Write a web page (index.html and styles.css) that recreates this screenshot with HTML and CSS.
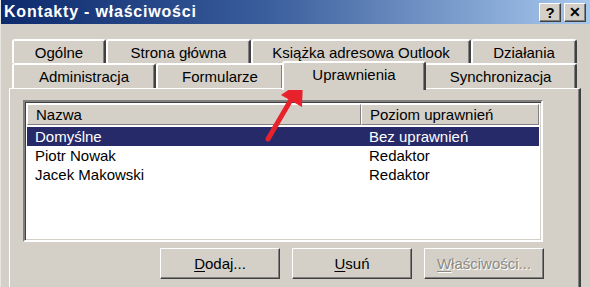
FILE: index.html
```html
<!DOCTYPE html>
<html>
	<head>
		<meta charset="UTF-8">
		<title>Kontakty - właściwości</title>
		<link rel="stylesheet" href="styles.css">
	</head>
	<body>
		<div class="window">
			<div class="titlebar">
				<span class="title">Kontakty - właściwości</span>
				<div class="caption-btns">
					<span class="cbtn">?</span>
					<span class="cbtn cbtn-x">✕</span>
				</div>
			</div>
			<div class="client">
				<div class="tabs">
					<div class="tabrow">
						<div class="tab w-ogolne">Ogólne</div>
						<div class="tab w-strona">Strona główna</div>
						<div class="tab w-ksiazka">Książka adresowa Outlook</div>
						<div class="tab w-dzialania">Działania</div>
					</div>
					<div class="tabrow">
						<div class="tab w-admin">Administracja</div>
						<div class="tab w-form">Formularze</div>
						<div class="tab tab-active w-upr">Uprawnienia</div>
						<div class="tab w-sync">Synchronizacja</div>
					</div>
				</div>
				<div class="panel">
					<div class="listview">
						<div class="lv-head">
							<div class="lv-col c1">Nazwa</div>
							<div class="lv-col c2">Poziom uprawnień</div>
						</div>
						<div class="lv-row selected">
							<div class="c1">Domyślne</div>
							<div class="c2">Bez uprawnień</div>
						</div>
						<div class="lv-row">
							<div class="c1">Piotr Nowak</div>
							<div class="c2">Redaktor</div>
						</div>
						<div class="lv-row">
							<div class="c1">Jacek Makowski</div>
							<div class="c2">Redaktor</div>
						</div>
					</div>
					<div class="buttons">
						<button class="btn"><u>D</u>odaj...</button>
						<button class="btn"><u>U</u>suń</button>
						<button class="btn btn-disabled"><u>W</u>łaściwości...</button>
					</div>
				</div>
			</div>
		</div>
		<svg class="arrow" width="590" height="287" viewBox="0 0 590 287">
			<line x1="268" y1="139" x2="292" y2="98" stroke="#e8222c" stroke-width="5" stroke-linecap="round"/>
			<polygon points="303,80 281,95 302,107" fill="#e8222c"/>
		</svg>
	</body>
</html>
```

FILE: styles.css
```css
*{margin:0;padding:0;box-sizing:border-box;}
body{width:590px;height:287px;overflow:hidden;background:#d4d0c8;font-family:"Liberation Sans",Arial,sans-serif;font-size:15px;color:#000;position:relative;}

.window{height:287px;border-left:1px solid #e8e6e0;}
.titlebar{height:24px;background:linear-gradient(to right,#0c2a6c,#3a5d9c 45%,#a8c9ee);display:flex;align-items:center;justify-content:space-between;padding:0 4px 0 3px;}
.title{color:#fff;font-weight:bold;font-size:16px;letter-spacing:0.8px;}
.caption-btns{display:flex;gap:3px;padding-top:1px;}
.cbtn{width:22px;height:19px;background:#d4d0c8;border:1px solid;border-color:#fff #404040 #404040 #fff;box-shadow:inset -1px -1px 0 #808080;font-weight:bold;font-size:15px;line-height:17px;text-align:center;}
.cbtn-x{font-size:14px;}

.client{padding:15px 0 0 8px;}
.tabs{padding-left:3px;}
.tabrow{display:flex;height:24px;}
.tabrow + .tabrow{height:25px;}
.tab{height:100%;background:#d4d0c8;border-left:2px solid #fff;border-top:2px solid #fff;border-right:2px solid #404040;box-shadow:inset -1px 0 0 #808080;border-radius:3px 3px 0 0;text-align:center;padding-top:3px;white-space:nowrap;}
.tab-active{position:relative;z-index:2;height:29px;margin:-2px -2px 0 -2px;padding-top:3px;}
.w-ogolne{width:94px;}
.w-strona{width:145px;}
.w-ksiazka{width:220px;}
.w-dzialania{width:106px;}
.w-admin{width:144px;}
.w-form{width:128px;}
.w-upr{width:144px;}
.w-sync{width:153px;}

.panel{width:572px;height:199px;border-left:1px solid #fff;border-top:1px solid #fff;border-right:2px solid #404040;box-shadow:inset -1px 0 0 #808080;padding:11px 0 0 13px;}
.listview{width:520px;height:142px;background:#fff;border:2px solid;border-color:#808080 #fff #fff #808080;box-shadow:inset 1px 1px 0 #404040,inset -1px -1px 0 #d4d0c8;padding:2px 0 0 2px;}
.lv-head{display:flex;height:21px;margin-right:2px;}
.lv-col{background:#d4d0c8;border:1px solid;border-color:#fff #808080 #808080 #fff;padding:1px 0 0 8px;}
.lv-col.c1{width:334px;}
.lv-col.c2{flex:1;}
.lv-row{display:flex;height:19px;margin-right:2px;}
.lv-head + .lv-row{margin-top:2px;}
.lv-row .c1{width:334px;padding:1px 0 0 8px;}
.lv-row .c2{flex:1;padding:1px 0 0 8px;}
.selected{background:#262a68;color:#fff;}

.buttons{display:flex;justify-content:flex-end;gap:12px;width:521px;margin-top:6px;}
.btn{width:120px;height:31px;background:#d4d0c8;font-family:"Liberation Sans",Arial,sans-serif;font-size:15px;border:1px solid;border-color:#fff #404040 #404040 #fff;box-shadow:inset -1px -1px 0 #808080;color:#000;}
.btn u{text-underline-offset:2px;}
.btn-disabled{color:#8c8a85;text-shadow:1px 1px 0 #fff;}

.arrow{position:absolute;left:0;top:0;pointer-events:none;}
```
